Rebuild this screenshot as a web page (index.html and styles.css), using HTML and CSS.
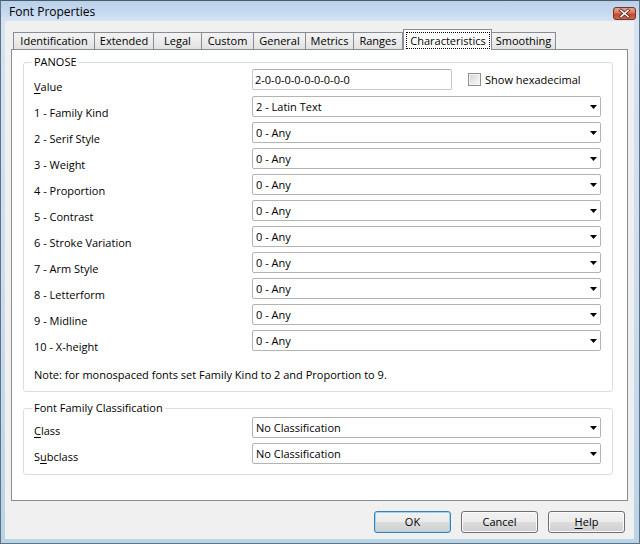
FILE: index.html
```html
<!DOCTYPE html>
<html>
<head>
<meta charset="utf-8">
<link rel="stylesheet" href="styles.css">
</head>
<body>
<div class="window">
  <div class="titlebar">
    <span class="title">Font Properties</span>
    <svg class="close" width="23" height="13" viewBox="0 0 23 13">
      <defs>
        <linearGradient id="cg" x1="0" y1="0" x2="0" y2="1">
          <stop offset="0" stop-color="#e9a696"/>
          <stop offset="0.45" stop-color="#d8775f"/>
          <stop offset="0.55" stop-color="#c4482c"/>
          <stop offset="1" stop-color="#d36a4c"/>
        </linearGradient>
      </defs>
      <rect x="0.5" y="0.5" width="22" height="12" rx="2.5" fill="url(#cg)" stroke="#7a3325"/>
      <path d="M8 3.5 L15 9.5 M15 3.5 L8 9.5" stroke="#5a2a22" stroke-width="3.2" stroke-linecap="square"/>
      <path d="M8 3.5 L15 9.5 M15 3.5 L8 9.5" stroke="#ffffff" stroke-width="1.6" stroke-linecap="square"/>
    </svg>
  </div>
  <div class="client">
    <div class="tabs">
      <div class="tab" style="width:82px">Identification</div>
      <div class="tab" style="width:59px">Extended</div>
      <div class="tab" style="width:48px">Legal</div>
      <div class="tab" style="width:52px">Custom</div>
      <div class="tab" style="width:52px">General</div>
      <div class="tab" style="width:48px">Metrics</div>
      <div class="tab" style="width:49px">Ranges</div>
      <div class="tab selected" style="width:89px"><span class="focus">Characteristics</span></div>
      <div class="tab" style="width:65px">Smoothing</div>
    </div>
    <div class="panel">
      <fieldset class="group panose">
        <legend>PANOSE</legend>
        <div class="body">
          <div class="row value-row">
            <label><u>V</u>alue</label>
            <div class="value-controls">
              <div class="textbox">2-0-0-0-0-0-0-0-0-0</div>
              <div class="check">
                <span class="checkbox"></span>
                <span>Show hexadecimal</span>
              </div>
            </div>
          </div>
          <div class="row"><label>1 - Family Kind</label><div class="combo"><span>2 - Latin Text</span><svg width="7" height="4"><polygon points="0,0 7,0 3.5,4" fill="#000"/></svg></div></div>
          <div class="row"><label>2 - Serif Style</label><div class="combo"><span>0 - Any</span><svg width="7" height="4"><polygon points="0,0 7,0 3.5,4" fill="#000"/></svg></div></div>
          <div class="row"><label>3 - Weight</label><div class="combo"><span>0 - Any</span><svg width="7" height="4"><polygon points="0,0 7,0 3.5,4" fill="#000"/></svg></div></div>
          <div class="row"><label>4 - Proportion</label><div class="combo"><span>0 - Any</span><svg width="7" height="4"><polygon points="0,0 7,0 3.5,4" fill="#000"/></svg></div></div>
          <div class="row"><label>5 - Contrast</label><div class="combo"><span>0 - Any</span><svg width="7" height="4"><polygon points="0,0 7,0 3.5,4" fill="#000"/></svg></div></div>
          <div class="row"><label>6 - Stroke Variation</label><div class="combo"><span>0 - Any</span><svg width="7" height="4"><polygon points="0,0 7,0 3.5,4" fill="#000"/></svg></div></div>
          <div class="row"><label>7 - Arm Style</label><div class="combo"><span>0 - Any</span><svg width="7" height="4"><polygon points="0,0 7,0 3.5,4" fill="#000"/></svg></div></div>
          <div class="row"><label>8 - Letterform</label><div class="combo"><span>0 - Any</span><svg width="7" height="4"><polygon points="0,0 7,0 3.5,4" fill="#000"/></svg></div></div>
          <div class="row"><label>9 - Midline</label><div class="combo"><span>0 - Any</span><svg width="7" height="4"><polygon points="0,0 7,0 3.5,4" fill="#000"/></svg></div></div>
          <div class="row"><label>10 - X-height</label><div class="combo"><span>0 - Any</span><svg width="7" height="4"><polygon points="0,0 7,0 3.5,4" fill="#000"/></svg></div></div>
          <p class="note">Note: for monospaced fonts set Family Kind to 2 and Proportion to 9.</p>
        </div>
      </fieldset>
      <fieldset class="group ffc">
        <legend>Font Family Classification</legend>
        <div class="body">
          <div class="row"><label><u>C</u>lass</label><div class="combo"><span>No Classification</span><svg width="7" height="4"><polygon points="0,0 7,0 3.5,4" fill="#000"/></svg></div></div>
          <div class="row"><label>S<u>u</u>bclass</label><div class="combo"><span>No Classification</span><svg width="7" height="4"><polygon points="0,0 7,0 3.5,4" fill="#000"/></svg></div></div>
        </div>
      </fieldset>
    </div>
    <div class="buttons">
      <div class="btn default">OK</div>
      <div class="btn">Cancel</div>
      <div class="btn"><u>H</u>elp</div>
    </div>
  </div>
</div>
</body>
</html>
```
FILE: styles.css
```css
* { box-sizing: border-box; }
html, body { margin: 0; padding: 0; }
body {
  font-family: "Open Sans", "Noto Sans", "DejaVu Sans", sans-serif;
  font-size: 11px;
  color: #000;
  background: #fff;
}
u { text-decoration: underline; text-underline-offset: 2px; }

.window {
  width: 640px;
  height: 544px;
  border: 1px solid #5f7184;
  border-top-color: #4b5a6b;
  background: linear-gradient(180deg, #b9d1ea 0px, #c6daef 12px, #d5e3f2 20px, #c9dbee 60%, #b8d4e6 100%);
  padding: 0 5px 4px 4px;
  display: flex;
  flex-direction: column;
}

.titlebar {
  height: 20px;
  display: flex;
  align-items: center;
  justify-content: space-between;
  padding: 0 0 0 4px;
}
.title {
  font-size: 12px;
  line-height: 16px;
  margin-top: 2px;
}
.close {
  margin-right: -2px;
  margin-top: 4px;
  display: block;
}

.client {
  flex: 1;
  background: #f0f0f0;
  padding: 8px 6px 6px 6px;
  display: flex;
  flex-direction: column;
}

.tabs {
  display: flex;
  align-items: flex-end;
  height: 21px;
  margin-bottom: -1px;
  padding-left: 2px;
}
.tab {
  height: 18px;
  border: 1px solid #898c95;
  border-bottom: none;
  margin-right: 0;
  background: linear-gradient(180deg, #f3f3f3 0%, #ebebeb 50%, #e0e0e0 100%);
  text-align: center;
  line-height: 16px;
  white-space: nowrap;
}
.tab + .tab { border-left: none; }
.tab.selected {
  height: 21px;
  background: #fff;
  position: relative;
  z-index: 1;
  border-left: 1px solid #898c95;
  margin-right: -1px;
  padding: 2px 1px 0 2px;
}
.tab.selected + .tab { border-left: 1px solid #898c95; }
.focus {
  display: block;
  height: 17px;
  line-height: 15px;
  border: 1px dotted #000;
}

.panel {
  height: 452px;
  border: 1px solid #898c95;
  background: #fff;
  padding: 5px 14px 0 11px;
}

.group {
  margin: 0;
  padding: 0;
  border: 1px solid #d5dfe5;
  border-radius: 3px;
  min-width: 0;
}
.group legend {
  margin-left: 8px;
  padding: 0 2px;
  line-height: 14px;
}
.group .body {
  padding: 0 11px 0 10px;
}
.panose .body { padding-bottom: 8px; }
.ffc { margin-top: 9px; }
.ffc .body { padding-top: 2px; padding-bottom: 5px; }

.row {
  display: grid;
  grid-template-columns: 218px 349px;
  height: 26px;
}
.row label {
  align-self: end;
  line-height: 16px;
  padding-bottom: 1px;
}
.ffc .row label { padding-bottom: 4px; }
.value-row { height: 27px; }

.value-controls {
  display: flex;
  align-items: flex-start;
}
.textbox {
  width: 200px;
  height: 21px;
  border: 1px solid #c5c8cf;
  border-top-color: #abadb3;
  border-radius: 2px;
  padding-left: 2px;
  line-height: 19px;
  background: #fff;
}
.check {
  display: flex;
  align-items: center;
  height: 21px;
  margin-left: 16px;
  gap: 4px;
}
.checkbox {
  width: 13px;
  height: 13px;
  border: 1px solid #8f8f8f;
  background: linear-gradient(135deg, #d2d2d2 0%, #e8e8e8 50%, #fbfbfb 100%);
  box-shadow: inset 0 0 0 1px #f4f4f4;
}

.combo {
  width: 349px;
  height: 21px;
  border: 1px solid #b4b4b4;
  border-radius: 2px;
  background: #fff;
  display: flex;
  align-items: center;
  justify-content: space-between;
  padding: 0 3px 0 3px;
  line-height: 19px;
}
.combo svg { display: block; }

.note {
  margin: 11px 0 0 0;
  line-height: 16px;
}

.buttons {
  display: flex;
  justify-content: flex-end;
  gap: 10px;
  margin-top: 10px;
  padding-right: 3px;
}
.btn {
  width: 77px;
  height: 22px;
  border: 1px solid #707070;
  border-radius: 3px;
  background: linear-gradient(180deg, #f2f2f2 0%, #ebebeb 50%, #dddddd 51%, #cfcfcf 100%);
  box-shadow: inset 0 0 0 1px #fbfbfb;
  text-align: center;
  line-height: 20px;
}
.btn.default {
  border-color: #3c7fb1;
  box-shadow: inset 0 0 0 1px #9fd5f3;
}
```
